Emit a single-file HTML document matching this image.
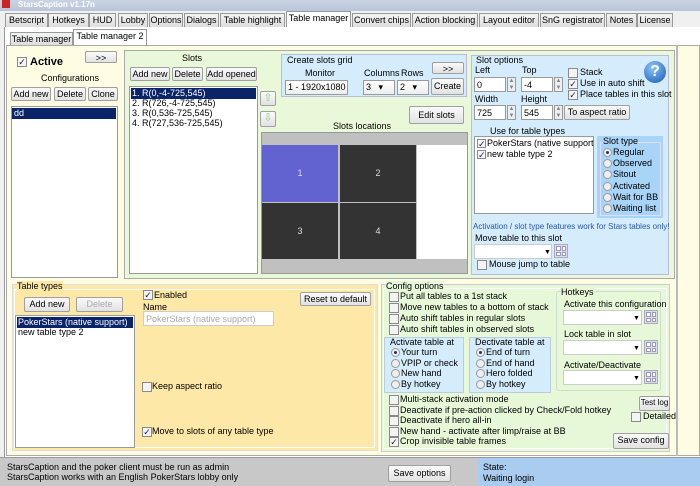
<!DOCTYPE html>
<html><head><style>
*{box-sizing:border-box;margin:0;padding:0}
body{width:700px;height:486px;overflow:hidden;background:#f0f0f0;font-family:"Liberation Sans",sans-serif;font-size:9px;color:#000;position:relative}
.a{position:absolute}
.t{position:absolute;white-space:nowrap;font-size:9px;line-height:11px}
.b{position:absolute;background:linear-gradient(#fafafa,#e2e2e2);border:1px solid #a0a0a0;border-radius:2px;text-align:center;font-size:9px;white-space:nowrap;line-height:12px}
.w{position:absolute;background:#fff;border:1px solid #9a9a9a}
.cb{position:absolute;width:10px;height:10px;border:1px solid #8a8a8a;background:#f4f4f4;font-size:9px;line-height:8px;text-align:center;color:#224}
.rd{position:absolute;width:9px;height:9px;border:1px solid #999;border-radius:50%;background:#eee}
.rd.on::after{content:"";position:absolute;left:2px;top:2px;width:3px;height:3px;border-radius:50%;background:#236}
.tab{position:absolute;top:13px;height:14px;border:1px solid #999;border-bottom:none;background:linear-gradient(#f4f4f4,#ddd);font-size:9px;line-height:13px;text-align:center;white-space:nowrap;overflow:hidden}
.sel{background:#0a246a;color:#fff}
.ic{position:absolute;width:14px;height:14px;border:1px solid #aab;background:#dde;display:grid;grid-template-columns:1fr 1fr;gap:1px;padding:1px}
.ic i{background:#fff;border:1px solid #99b}
</style></head><body>
<div class="a" style="left:0;top:0;width:700px;height:11px;background:linear-gradient(#c9d4e2,#b9c6d8)"></div>
<div class="a" style="left:2px;top:0;width:8px;height:8px;background:#c22"></div>
<div class="t" style="left:18px;top:0;color:#fff;font-weight:bold;font-size:8px;line-height:9px">StarsCaption v1.17n</div>
<div class="a" style="left:0;top:11px;width:700px;height:475px;background:#f0f0f0"></div>
<div class="tab" style="left:5px;width:43px">Betscript</div>
<div class="tab" style="left:48px;width:41px">Hotkeys</div>
<div class="tab" style="left:89px;width:27px">HUD</div>
<div class="tab" style="left:118px;width:30px">Lobby</div>
<div class="tab" style="left:149px;width:34px">Options</div>
<div class="tab" style="left:184px;width:35px">Dialogs</div>
<div class="tab" style="left:220px;width:65px">Table highlight</div>
<div class="tab" style="left:286px;top:11px;height:17px;width:65px;background:#fff">Table manager</div>
<div class="tab" style="left:352px;width:59px">Convert chips</div>
<div class="tab" style="left:412px;width:66px">Action blocking</div>
<div class="tab" style="left:479px;width:60px">Layout editor</div>
<div class="tab" style="left:540px;width:65px">SnG registrator</div>
<div class="tab" style="left:606px;width:31px">Notes</div>
<div class="tab" style="left:637px;width:36px">License</div>
<div class="a" style="left:4px;top:27px;width:696px;height:430px;background:#fff;border-left:1px solid #999"></div>
<div class="tab" style="left:10px;top:32px;height:13px;width:63px">Table manager</div>
<div class="tab" style="left:73px;top:29px;height:17px;width:74px;background:#fff">Table manager 2</div>
<div class="a" style="left:6px;top:45px;width:694px;height:411px;background:#fefde3;border:1px solid #aaa"></div>
<div class="a" style="left:676px;top:45px;width:2px;height:411px;background:#bbb"></div>

<div class="cb" style="left:17px;top:57px">✓</div>
<div class="t" style="left:30px;top:56px;font-weight:bold;font-size:11px;line-height:12px">Active</div>
<div class="b" style="left:85px;top:51px;width:32px;height:12px">&gt;&gt;</div>
<div class="t" style="left:41px;top:73px">Configurations</div>
<div class="b" style="left:11px;top:87px;width:40px;height:14px">Add new</div>
<div class="b" style="left:54px;top:87px;width:32px;height:14px">Delete</div>
<div class="b" style="left:88px;top:87px;width:30px;height:14px">Clone</div>
<div class="w" style="left:11px;top:106px;width:107px;height:172px"></div>
<div class="t sel" style="left:12px;top:108px;width:104px;padding-left:2px">dd</div>

<div class="a" style="left:124px;top:50px;width:551px;height:229px;background:#e8f8d8;border:1px solid #aaa"></div>
<div class="t" style="left:182px;top:53px">Slots</div>
<div class="b" style="left:130px;top:67px;width:40px;height:14px">Add new</div>
<div class="b" style="left:172px;top:67px;width:31px;height:14px">Delete</div>
<div class="b" style="left:206px;top:67px;width:51px;height:14px">Add opened</div>
<div class="w" style="left:129px;top:86px;width:129px;height:188px"></div>
<div class="t sel" style="left:131px;top:88px;width:125px;padding-left:1px">1. R(0,-4-725,545)</div>
<div class="t" style="left:132px;top:98px">2. R(726,-4-725,545)</div>
<div class="t" style="left:132px;top:108px">3. R(0,536-725,545)</div>
<div class="t" style="left:132px;top:118px">4. R(727,536-725,545)</div>
<div class="b" style="left:260px;top:91px;width:16px;height:15px;color:#8c8;font-size:11px">⇧</div>
<div class="b" style="left:260px;top:111px;width:16px;height:16px;color:#8c8;font-size:11px">⇩</div>

<div class="a" style="left:281px;top:54px;width:186px;height:43px;background:#d4ecfb;border:1px solid #bbd"></div>
<div class="t" style="left:287px;top:55px">Create slots grid</div>
<div class="t" style="left:305px;top:68px">Monitor</div>
<div class="w" style="left:285px;top:80px;width:63px;height:15px;background:linear-gradient(#fff,#eee)"><span class="t" style="left:2px;top:1px">1 - 1920x1080</span></div>
<div class="t" style="left:364px;top:68px">Columns</div>
<div class="t" style="left:401px;top:68px">Rows</div>
<div class="w" style="left:363px;top:80px;width:32px;height:15px;background:linear-gradient(#fff,#eee)"><span class="t" style="left:2px;top:1px">3 &nbsp;&nbsp;▾</span></div>
<div class="w" style="left:397px;top:80px;width:32px;height:15px;background:linear-gradient(#fff,#eee)"><span class="t" style="left:2px;top:1px">2 &nbsp;&nbsp;▾</span></div>
<div class="b" style="left:432px;top:62px;width:32px;height:12px">&gt;&gt;</div>
<div class="b" style="left:431px;top:78px;width:33px;height:17px;line-height:15px">Create</div>
<div class="b" style="left:409px;top:106px;width:55px;height:18px;line-height:16px">Edit slots</div>
<div class="t" style="left:333px;top:121px">Slots locations</div>
<div class="a" style="left:261px;top:132px;width:207px;height:142px;background:#c0c0c0;border:1px solid #999"></div>
<div class="a" style="left:262px;top:145px;width:76px;height:57px;background:#6262d0;color:#ddd;text-align:center;line-height:57px;font-size:9px">1</div>
<div class="a" style="left:340px;top:145px;width:76px;height:57px;background:#333;color:#ddd;text-align:center;line-height:57px;font-size:9px">2</div>
<div class="a" style="left:417px;top:145px;width:50px;height:114px;background:#fff"></div>
<div class="a" style="left:262px;top:203px;width:76px;height:56px;background:#333;color:#ddd;text-align:center;line-height:56px;font-size:9px">3</div>
<div class="a" style="left:340px;top:203px;width:76px;height:56px;background:#333;color:#ddd;text-align:center;line-height:56px;font-size:9px">4</div>

<div class="a" style="left:471px;top:55px;width:198px;height:220px;background:#d4ecfb;border:1px solid #bbd"></div>
<div class="t" style="left:476px;top:55px">Slot options</div>
<div class="t" style="left:475px;top:65px">Left</div>
<div class="t" style="left:522px;top:65px">Top</div>
<div class="w" style="left:474px;top:77px;width:32px;height:15px"><span class="t" style="left:2px;top:2px">0</span></div>
<div class="w" style="left:507px;top:77px;width:9px;height:15px;background:#eee;font-size:6px;color:#789;text-align:center;line-height:7px">▲<br>▼</div>
<div class="w" style="left:521px;top:77px;width:32px;height:15px"><span class="t" style="left:2px;top:2px">-4</span></div>
<div class="w" style="left:554px;top:77px;width:9px;height:15px;background:#eee;font-size:6px;color:#789;text-align:center;line-height:7px">▲<br>▼</div>
<div class="cb" style="left:568px;top:68px"></div><div class="t" style="left:580px;top:67px">Stack</div>
<div class="cb" style="left:568px;top:79px">✓</div><div class="t" style="left:580px;top:78px">Use in auto shift</div>
<div class="cb" style="left:568px;top:90px">✓</div><div class="t" style="left:580px;top:89px">Place tables in this slot</div>
<div class="a" style="left:644px;top:61px;width:22px;height:22px;border-radius:50%;background:radial-gradient(circle at 40% 30%,#8cc4f4,#1458b8);color:#fff;font-weight:bold;font-size:16px;text-align:center;line-height:22px">?</div>
<div class="t" style="left:475px;top:94px">Width</div>
<div class="t" style="left:521px;top:94px">Height</div>
<div class="w" style="left:474px;top:105px;width:32px;height:15px"><span class="t" style="left:2px;top:2px">725</span></div>
<div class="w" style="left:507px;top:105px;width:9px;height:15px;background:#eee;font-size:6px;color:#789;text-align:center;line-height:7px">▲<br>▼</div>
<div class="w" style="left:521px;top:105px;width:32px;height:15px"><span class="t" style="left:2px;top:2px">545</span></div>
<div class="w" style="left:554px;top:105px;width:9px;height:15px;background:#eee;font-size:6px;color:#789;text-align:center;line-height:7px">▲<br>▼</div>
<div class="b" style="left:564px;top:105px;width:66px;height:15px">To aspect ratio</div>
<div class="t" style="left:490px;top:126px">Use for table types</div>
<div class="w" style="left:474px;top:136px;width:120px;height:78px;overflow:hidden"></div>
<div class="cb" style="left:477px;top:139px;width:9px;height:9px">✓</div><div class="t" style="left:487px;top:138px">PokerStars (native support</div>
<div class="cb" style="left:477px;top:150px;width:9px;height:9px">✓</div><div class="t" style="left:487px;top:149px">new table type 2</div>
<div class="a" style="left:597px;top:136px;width:66px;height:82px;background:#a8d4f8"></div>
<div class="a" style="left:600px;top:142px;width:61px;height:74px;border:1px solid #ddf"></div>
<div class="t" style="left:603px;top:136px;background:#a8d4f8">Slot type</div>
<div class="rd on" style="left:603px;top:148px"></div><div class="t" style="left:613px;top:147px">Regular</div>
<div class="rd" style="left:603px;top:159px"></div><div class="t" style="left:613px;top:158px">Observed</div>
<div class="rd" style="left:603px;top:170px"></div><div class="t" style="left:613px;top:169px">Sitout</div>
<div class="rd" style="left:603px;top:182px"></div><div class="t" style="left:613px;top:181px">Activated</div>
<div class="rd" style="left:603px;top:193px"></div><div class="t" style="left:613px;top:192px">Wait for BB</div>
<div class="rd" style="left:603px;top:204px"></div><div class="t" style="left:613px;top:203px">Waiting list</div>
<div class="t" style="left:473px;top:221px;color:#2858a8;font-size:8px">Activation / slot type features work for Stars tables only!</div>
<div class="t" style="left:475px;top:233px">Move table to this slot</div>
<div class="w" style="left:474px;top:244px;width:78px;height:15px;border-color:#ccc"><span class="t" style="left:69px;top:2px;font-size:7px">▼</span></div>
<div class="ic" style="left:554px;top:244px"><i></i><i></i><i></i><i></i></div>
<div class="cb" style="left:477px;top:260px"></div><div class="t" style="left:489px;top:259px">Mouse jump to table</div>

<div class="a" style="left:12px;top:284px;width:366px;height:167px;background:#fde8a8;border:1px solid #ddd"></div>
<div class="a" style="left:14px;top:289px;width:361px;height:159px;border:1px solid #fff"></div>
<div class="t" style="left:17px;top:281px;background:#fde8a8">Table types</div>
<div class="b" style="left:24px;top:297px;width:46px;height:15px">Add new</div>
<div class="b" style="left:76px;top:297px;width:47px;height:15px;color:#aaa">Delete</div>
<div class="w" style="left:15px;top:315px;width:120px;height:133px"></div>
<div class="t sel" style="left:17px;top:317px;width:116px;padding-left:1px">PokerStars (native support)</div>
<div class="t" style="left:18px;top:327px">new table type 2</div>
<div class="cb" style="left:143px;top:290px">✓</div><div class="t" style="left:154px;top:290px">Enabled</div>
<div class="t" style="left:143px;top:302px">Name</div>
<div class="w" style="left:143px;top:311px;width:131px;height:15px;border-color:#ccc"><span class="t" style="left:2px;top:2px;color:#aaa">PokerStars (native support)</span></div>
<div class="b" style="left:300px;top:292px;width:71px;height:14px">Reset to default</div>
<div class="cb" style="left:142px;top:382px"></div><div class="t" style="left:152px;top:381px">Keep aspect ratio</div>
<div class="cb" style="left:142px;top:427px">✓</div><div class="t" style="left:152px;top:426px">Move to slots of any table type</div>

<div class="a" style="left:381px;top:284px;width:289px;height:168px;background:#e6f8d8;border:1px solid #ccc"></div>
<div class="a" style="left:383px;top:288px;width:284px;height:161px;border:1px solid #fff"></div>
<div class="t" style="left:386px;top:281px;background:#e6f8d8">Config options</div>
<div class="cb" style="left:389px;top:292px"></div><div class="t" style="left:400px;top:291px">Put all tables to a 1st stack</div>
<div class="cb" style="left:389px;top:303px"></div><div class="t" style="left:400px;top:302px">Move new tables to a bottom of stack</div>
<div class="cb" style="left:389px;top:314px"></div><div class="t" style="left:400px;top:313px">Auto shift tables in regular slots</div>
<div class="cb" style="left:389px;top:325px"></div><div class="t" style="left:400px;top:324px">Auto shift tables in observed slots</div>
<div class="a" style="left:384px;top:337px;width:80px;height:56px;background:#d4ecfb;border:1px solid #bcd"></div>
<div class="t" style="left:390px;top:337px">Activate table at</div>
<div class="rd on" style="left:391px;top:348px"></div><div class="t" style="left:401px;top:347px">Your turn</div>
<div class="rd" style="left:391px;top:359px"></div><div class="t" style="left:401px;top:358px">VPIP or check</div>
<div class="rd" style="left:391px;top:369px"></div><div class="t" style="left:401px;top:368px">New hand</div>
<div class="rd" style="left:391px;top:380px"></div><div class="t" style="left:401px;top:379px">By hotkey</div>
<div class="a" style="left:469px;top:337px;width:82px;height:56px;background:#d4ecfb;border:1px solid #bcd"></div>
<div class="t" style="left:475px;top:337px">Dectivate table at</div>
<div class="rd on" style="left:476px;top:348px"></div><div class="t" style="left:486px;top:347px">End of turn</div>
<div class="rd" style="left:476px;top:359px"></div><div class="t" style="left:486px;top:358px">End of hand</div>
<div class="rd" style="left:476px;top:369px"></div><div class="t" style="left:486px;top:368px">Hero folded</div>
<div class="rd" style="left:476px;top:380px"></div><div class="t" style="left:486px;top:379px">By hotkey</div>
<div class="a" style="left:556px;top:291px;width:105px;height:100px;border:1px solid #cdc;border-radius:3px"></div>
<div class="t" style="left:561px;top:287px;background:#e6f8d8">Hotkeys</div>
<div class="t" style="left:564px;top:299px">Activate this configuration</div>
<div class="w" style="left:563px;top:310px;width:79px;height:15px;border-color:#ccc"><span class="t" style="left:69px;top:2px;font-size:7px">▼</span></div>
<div class="ic" style="left:644px;top:310px"><i></i><i></i><i></i><i></i></div>
<div class="t" style="left:564px;top:329px">Lock table in slot</div>
<div class="w" style="left:563px;top:340px;width:79px;height:15px;border-color:#ccc"><span class="t" style="left:69px;top:2px;font-size:7px">▼</span></div>
<div class="ic" style="left:644px;top:340px"><i></i><i></i><i></i><i></i></div>
<div class="t" style="left:564px;top:360px">Activate/Deactivate</div>
<div class="w" style="left:563px;top:370px;width:79px;height:15px;border-color:#ccc"><span class="t" style="left:69px;top:2px;font-size:7px">▼</span></div>
<div class="ic" style="left:644px;top:370px"><i></i><i></i><i></i><i></i></div>
<div class="cb" style="left:389px;top:395px"></div><div class="t" style="left:400px;top:394px">Multi-stack activation mode</div>
<div class="cb" style="left:389px;top:406px"></div><div class="t" style="left:400px;top:405px">Deactivate if pre-action clicked by Check/Fold hotkey</div>
<div class="cb" style="left:389px;top:416px"></div><div class="t" style="left:400px;top:415px">Deactivate if hero all-in</div>
<div class="cb" style="left:389px;top:427px"></div><div class="t" style="left:400px;top:426px">New hand - activate after limp/raise at BB</div>
<div class="cb" style="left:389px;top:437px">✓</div><div class="t" style="left:400px;top:436px">Crop invisible table frames</div>
<div class="b" style="left:639px;top:396px;width:31px;height:15px;font-size:8px">Test log</div>
<div class="cb" style="left:631px;top:412px"></div><div class="t" style="left:643px;top:411px">Detailed</div>
<div class="b" style="left:613px;top:433px;width:56px;height:16px">Save config</div>

<div class="a" style="left:0;top:457px;width:700px;height:29px;background:#c8c8c8;border-top:1px solid #999"></div>
<div class="t" style="left:7px;top:462px">StarsCaption and the poker client must be run as admin</div>
<div class="t" style="left:7px;top:472px">StarsCaption works with an English PokerStars lobby only</div>
<div class="b" style="left:388px;top:465px;width:63px;height:17px;line-height:15px">Save options</div>
<div class="a" style="left:478px;top:458px;width:222px;height:28px;background:#a9ccf0"></div>
<div class="t" style="left:483px;top:462px">State:</div>
<div class="t" style="left:483px;top:473px">Waiting login</div>
</body></html>
